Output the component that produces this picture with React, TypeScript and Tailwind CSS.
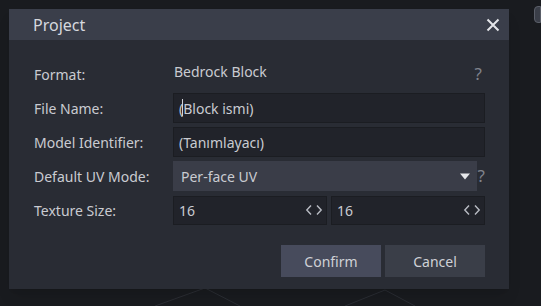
import React from 'react';

const font = { fontFamily: '"Noto Sans", "Open Sans", sans-serif' };

function Help() {
  return <span className="w-4 text-center text-[17px] leading-none text-[#80838c]">?</span>;
}

function Arrows() {
  return (
    <svg width="18" height="12" viewBox="0 0 18 12" className="text-[#b9bcc4]">
      <path d="M6 1.5 L1.8 6 L6 10.5 M12 1.5 L16.2 6 L12 10.5" fill="none" stroke="currentColor" strokeWidth="1.4" />
    </svg>
  );
}

function Row({ label, children }: { label: string; children: React.ReactNode }) {
  return (
    <div className="flex h-[30px] items-center">
      <div className="w-[139px] shrink-0 text-[14px] text-[#c9cbd1]">{label}</div>
      <div className="flex flex-1 items-center">{children}</div>
    </div>
  );
}

export default function App() {
  return (
    <div className="relative h-[306px] w-[541px] overflow-hidden bg-[#191b1f]" style={font}>
      {/* floor grid lines */}
      <svg className="absolute inset-0" width="541" height="306">
        <path d="M155 306 L205 288 L240 306 M345 306 L385 290 L415 306" stroke="#2a2d33" strokeWidth="1" fill="none" />
      </svg>
      <div className="absolute right-0 top-[6px] h-[17px] w-[7px] rounded-l-sm border border-[#5a5e68] bg-[#3a3e48]" />

      <div className="absolute left-[9px] top-[9px] flex h-[280px] w-[500px] flex-col bg-[#292c34] shadow-lg">
        <div className="flex h-[31px] items-center justify-between bg-[#3a3e4a] pl-[24px] pr-[9px]">
          <span className="text-[16px] text-[#d6d8de]">Project</span>
          <svg width="14" height="14" viewBox="0 0 14 14">
            <path d="M1.5 1.5 L12.5 12.5 M12.5 1.5 L1.5 12.5" stroke="#e4e5e9" strokeWidth="2" />
          </svg>
        </div>

        <div className="flex flex-1 flex-col gap-[4px] pl-[25px] pr-[24px] pt-[19px]">
          <Row label="Format:">
            <span className="mb-[6px] flex-1 pl-px text-[14px] text-[#c9cbd1]">Bedrock Block</span>
            <span className="mr-[3px]"><Help /></span>
          </Row>
          <Row label="File Name:">
            <div className="flex h-[30px] flex-1 items-center border border-[#1b1d22] bg-[#21232a] px-[5px] text-[14px] text-[#c9cbd1]">
              (
              <span className="relative">
                <span className="absolute -left-px top-[1px] h-[17px] w-px bg-[#d0d2d8]" />
                Block ismi)
              </span>
            </div>
          </Row>
          <Row label="Model Identifier:">
            <div className="flex h-[30px] flex-1 items-center border border-[#1b1d22] bg-[#21232a] px-[5px] text-[14px] text-[#c9cbd1]">
              (Tanımlayacı)
            </div>
          </Row>
          <Row label="Default UV Mode:">
            <div className="flex h-[30px] flex-1 items-center justify-between bg-[#3a3d48] pl-[8px] pr-[7px] text-[14px] text-[#c9cbd1]">
              <span>Per-face UV</span>
              <svg width="10" height="7" viewBox="0 0 10 7">
                <path d="M0 0.5 L10 0.5 L5 6.5 Z" fill="#e6e7ea" />
              </svg>
            </div>
            <span className="ml-[1px]"><Help /></span>
          </Row>
          <Row label="Texture Size:">
            <div className="flex flex-1 gap-[4px]">
              <div className="flex h-[29px] flex-1 items-center justify-between border border-[#1b1d22] bg-[#21232a] pl-[5px] pr-[3px] text-[14px] text-[#c9cbd1]">
                <span>16</span>
                <Arrows />
              </div>
              <div className="flex h-[29px] flex-1 items-center justify-between border border-[#1b1d22] bg-[#21232a] pl-[5px] pr-[3px] text-[14px] text-[#c9cbd1]">
                <span>16</span>
                <Arrows />
              </div>
            </div>
          </Row>

          <div className="mt-[16px] flex justify-end gap-[4px]">
            <button className="h-[32px] w-[100px] bg-[#474b5c] text-[14px] text-[#cfd1d6]">Confirm</button>
            <button className="h-[32px] w-[100px] bg-[#3a3e48] text-[14px] text-[#cfd1d6]">Cancel</button>
          </div>
        </div>
      </div>
    </div>
  );
}
